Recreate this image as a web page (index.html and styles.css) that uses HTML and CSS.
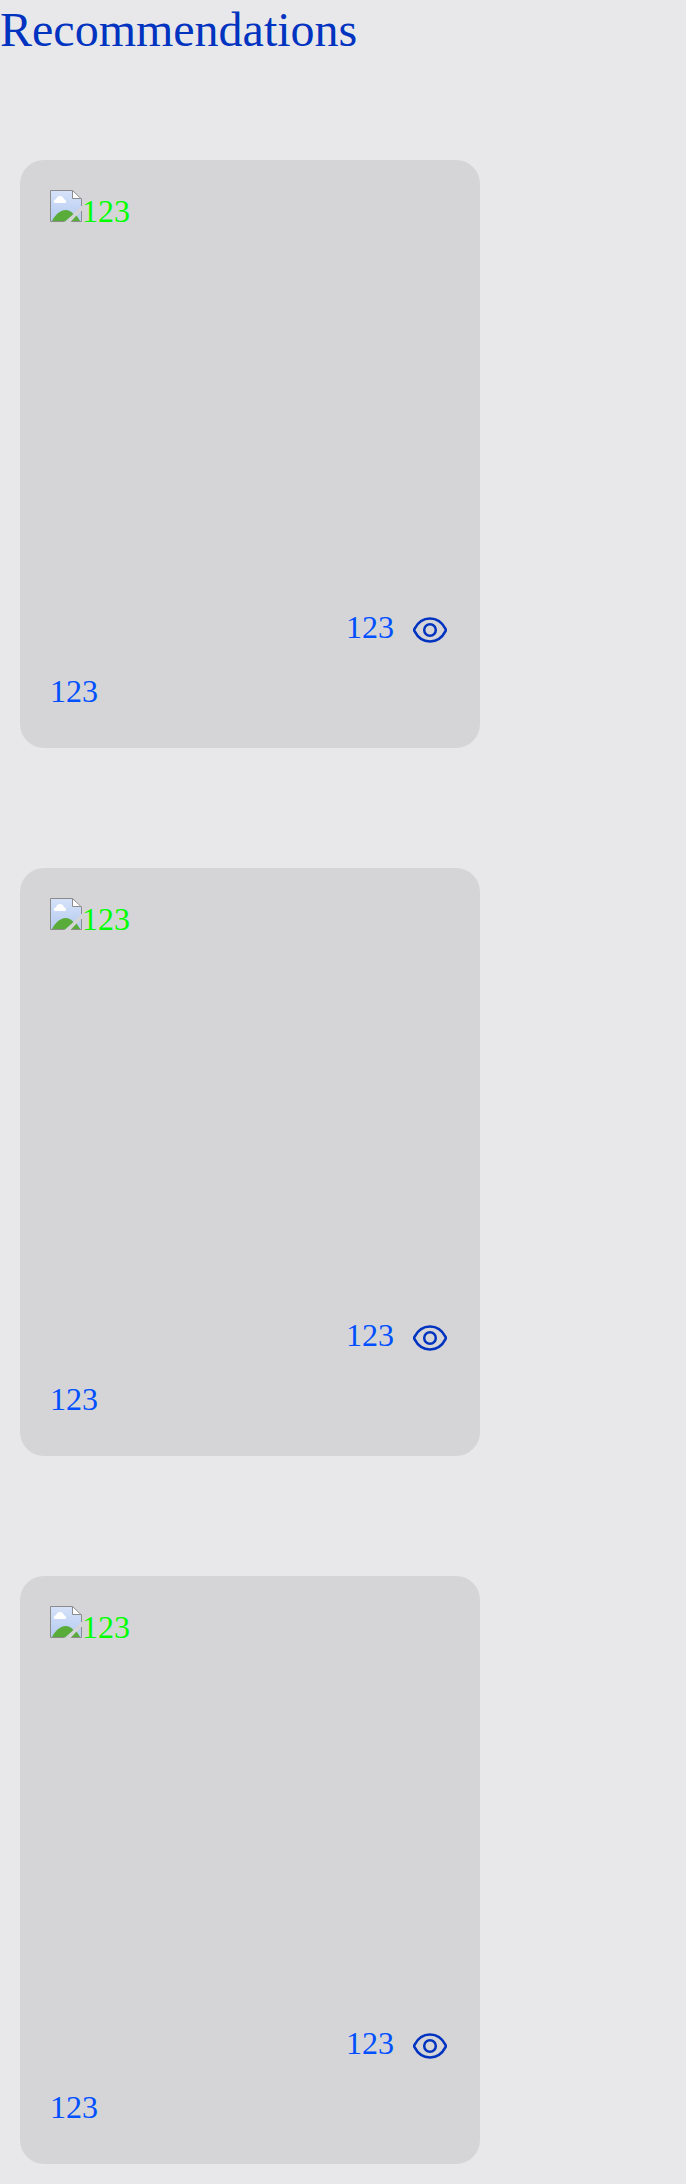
FILE: index.html
```
<!DOCTYPE html>
<html lang="en">
<head>
<meta charset="utf-8">
<title>Recommendations</title>
<link rel="stylesheet" href="styles.css">
</head>
<body>
<svg class="defs" width="0" height="0" aria-hidden="true">
  <linearGradient id="sky" x1="0" y1="0" x2="0" y2="1"><stop offset="0" stop-color="#d6e2f8"/><stop offset="1" stop-color="#b4caf2"/></linearGradient>
  <symbol id="picture" viewBox="0 0 32 32">
    <path d="M.5 .5H22.500L31.500 9V16L15.500 31.500H.5Z" fill="url(#sky)"/>
    <path d="M2 31C5 25 10 20 15.500 20C19 20 21.500 22 23.500 24L15 31.500H2Z" fill="#5aac3a"/>
    <path d="M27 25.500L31.500 21V31.500H21Z" fill="#bccff3"/>
    <path d="M21 31.500L26.500 25.500L30.500 31.500Z" fill="#5aac3a"/>
    <path d="M5.500 13C3.200 13 3.200 9.500 6 9.300C7 5 13 5 13.800 9C16 9.500 16.800 11.500 15.500 13Z" fill="#fff"/>
    <path d="M22.500 .5V8.500H31.500Z" fill="#fff"/>
    <path d="M14 31.500H.5V.5H22.500L31.500 9V16M22.500 .5V8.500H31.500M31.500 21V31.500H21" fill="none" stroke="#8c8c8c"/>
  </symbol>
  <symbol id="eye" viewBox="0 0 34 26">
    <path d="M1.500 14.200Q.9 13 1.500 11.800C5 5 10.500 1.500 17 1.500S29 5 32.500 11.800Q33.100 13 32.500 14.200C29 21 23.500 24.500 17 24.500S5 21 1.500 14.200Z" fill="none" stroke="#0033c0" stroke-width="2.600" stroke-linejoin="round"/>
    <circle cx="17" cy="13" r="5.800" fill="none" stroke="#0033c0" stroke-width="2.500"/>
  </symbol>
</svg>
<h1 class="title">Recommendations</h1>
<main class="list">
  <article class="card">
    <div class="photo"><svg class="picture"><use href="#picture"/></svg><span>123</span></div>
    <div class="views"><span>123</span><svg class="eye"><use href="#eye"/></svg></div>
    <p class="caption">123</p>
  </article>
  <article class="card">
    <div class="photo"><svg class="picture"><use href="#picture"/></svg><span>123</span></div>
    <div class="views"><span>123</span><svg class="eye"><use href="#eye"/></svg></div>
    <p class="caption">123</p>
  </article>
  <article class="card">
    <div class="photo"><svg class="picture"><use href="#picture"/></svg><span>123</span></div>
    <div class="views"><span>123</span><svg class="eye"><use href="#eye"/></svg></div>
    <p class="caption">123</p>
  </article>
</main>
</body>
</html>
```
FILE: styles.css
```
* { box-sizing: border-box; }
body {
  margin: 0;
  min-height: 2184px;
  background: #e8e8ea;
  font: 32px/36px "Liberation Serif", serif;
}
.defs { display: block; }
.title {
  margin: 0;
  height: 60px;
  font-size: 48px;
  line-height: 60px;
  font-weight: 400;
  color: #0033c0;
}
.list {
  display: flex;
  flex-direction: column;
  gap: 120px;
  padding: 100px 20px 20px;
}
.card {
  width: 460px;
  height: 588px;
  padding: 30px;
  border-radius: 24px;
  background: #d5d5d7;
  color: #0050ff;
}
.photo {
  display: flex;
  height: 400px;
  color: #00ff00;
}
.photo span { padding-top: 3px; }
.picture { width: 32px; height: 32px; }
.views {
  display: flex;
  justify-content: flex-end;
  align-items: center;
  gap: 19px;
  height: 76px;
  padding-right: 3px;
}
.views span { margin-bottom: 2px; }
.eye { width: 34px; height: 26px; margin-top: 4px; }
.caption { margin: 7px 0 0; }
```
